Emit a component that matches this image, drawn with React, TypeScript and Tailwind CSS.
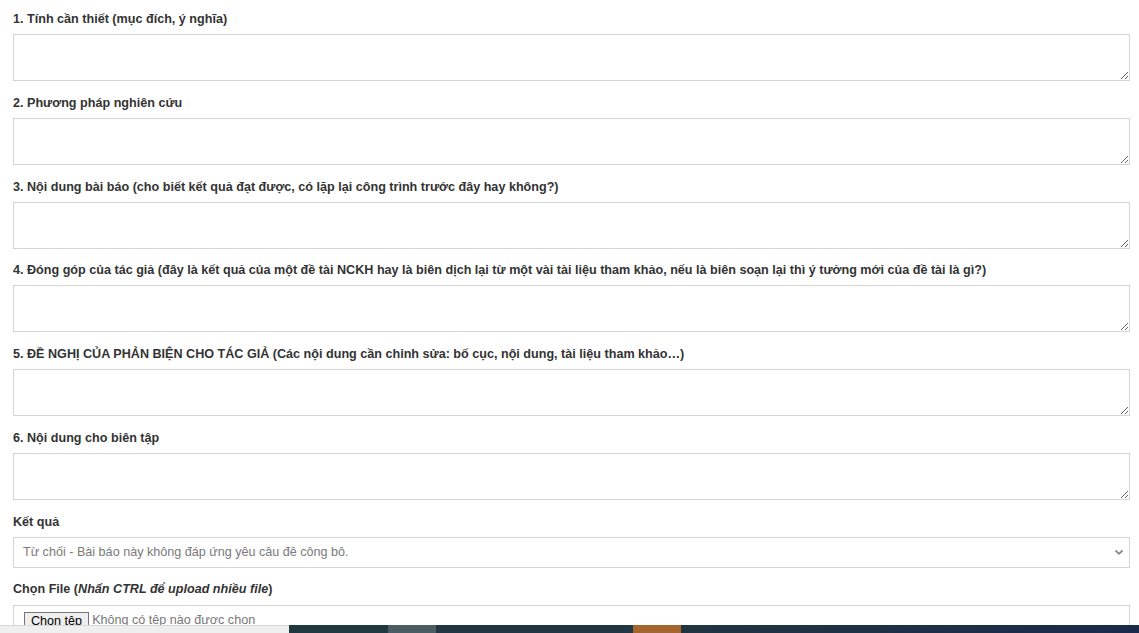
import React from "react";

const fields = [
  "1. Tính cần thiết (mục đích, ý nghĩa)",
  "2. Phương pháp nghiên cứu",
  "3. Nội dung bài báo (cho biết kết quả đạt được, có lặp lại công trình trước đây hay không?)",
  "4. Đóng góp của tác giả (đây là kết quả của một đề tài NCKH hay là biên dịch lại từ một vài tài liệu tham khảo, nếu là biên soạn lại thì ý tưởng mới của đề tài là gì?)",
  "5. ĐỀ NGHỊ CỦA PHẢN BIỆN CHO TÁC GIẢ (Các nội dung cần chỉnh sửa: bố cục, nội dung, tài liệu tham khảo…)",
  "6. Nội dung cho biên tập",
];

function Field({ label }: { label: string }) {
  return (
    <div className="mb-[12.8px]">
      <label className="block text-[12.6px] leading-[18px] font-bold text-[#333] mb-[6px]">{label}</label>
      <textarea className="block w-full h-[47px] border border-[#d4d4d4] bg-white outline-none" />
    </div>
  );
}

export default function App() {
  return (
    <div className="min-h-[633px] bg-white font-['Liberation_Sans',Arial,sans-serif]">
      <div className="pt-[10px] pl-[13px] pr-[9px]">
        {fields.map((f) => <Field key={f} label={f} />)}

        <label className="block text-[12.6px] leading-[18px] font-bold text-[#333] mb-[6px]">Kết quả</label>
        <div className="flex items-center justify-between h-[31px] border border-[#d4d4d4] pl-[9px] pr-[5px] mb-[12px]">
          <span className="text-[12.6px] text-[#7a7a7a]">Từ chối - Bài báo này không đáp ứng yêu câu đê công bô.</span>
          <svg width="10" height="7" viewBox="0 0 10 7">
            <path d="M1.5 1.5 L5 4.8 L8.5 1.5" stroke="#888" strokeWidth="1.8" fill="none" />
          </svg>
        </div>

        <label className="block text-[12.6px] leading-[18px] font-bold text-[#333] mb-[7px]">
          Chọn File (<i>Nhấn CTRL để upload nhiều file</i>)
        </label>
        <div className="h-[40px] border border-[#d4d4d4] pl-[10px] pt-[6px] flex items-start">
          <button className="text-[12.6px] leading-[15px] px-[6px] py-[1px] border border-[#767676] bg-[#efefef] text-black">Chon tệp</button>
          <span className="text-[12.6px] leading-[17px] text-[#777] ml-[3px]">Không có tệp nào đươc chon</span>
        </div>
      </div>

      <div className="fixed bottom-0 left-0 right-0 h-[8px] flex">
        <div className="w-[289px] bg-[#efefef] border-t border-[#d8d8d8]" />
        <div className="w-[99px] bg-[#213840]" />
        <div className="w-[48px] bg-[#4b5c62]" />
        <div className="w-[197px] bg-[#213640]" />
        <div className="w-[48px] bg-[#a5652f]" />
        <div className="flex-1 bg-gradient-to-r from-[#213440] to-[#1b2a4a]" />
      </div>
    </div>
  );
}
